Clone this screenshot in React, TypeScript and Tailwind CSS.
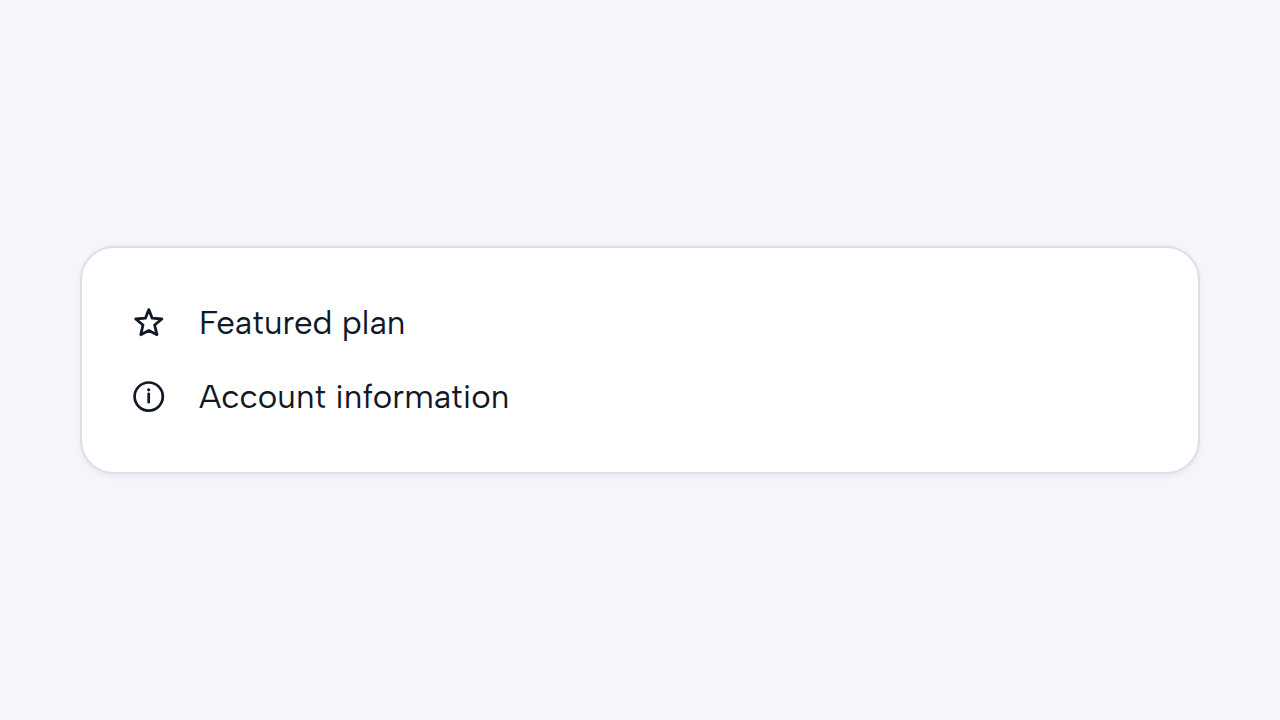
import React from "react";

type Item = {
  label: string;
  icon: React.ReactNode;
};

const StarIcon: React.FC = () => (
  <svg
    viewBox="0 0 34 34"
    className="size-[34px] shrink-0"
    fill="none"
    stroke="currentColor"
    strokeWidth="2.8"
    strokeLinejoin="round"
    aria-hidden="true"
  >
    <path d="M16.8 3.6 L20.2 12.2 L29.9 13 L22.6 19 L25 28.7 L16.8 24.6 L8.8 28.7 L11 19 L3.7 13 L13.4 12.2 Z" />
  </svg>
);

const InfoIcon: React.FC = () => (
  <svg
    viewBox="0 0 34 34"
    className="size-[34px] shrink-0"
    fill="none"
    stroke="currentColor"
    strokeWidth="2.7"
    strokeLinecap="round"
    aria-hidden="true"
  >
    <circle cx="16.7" cy="16.6" r="14.1" />
    <path d="M16.7 13.8 V22.2" />
    <circle cx="16.7" cy="9.8" r="1.6" fill="currentColor" stroke="none" />
  </svg>
);

const ITEMS: Item[] = [
  { label: "Featured plan", icon: <StarIcon /> },
  { label: "Account information", icon: <InfoIcon /> },
];

const App: React.FC = () => {
  return (
    <main className="flex min-h-screen items-center bg-[#f4f6fa] px-20 font-['Albert_Sans','Figtree','Lato',sans-serif] text-[#111827]">
      <section className="w-full rounded-[34px] border-2 border-[#dcdfe8] bg-white px-[50px] py-[38px] shadow-[0_2px_6px_rgba(17,24,39,0.06)]">
        <ul>
          {ITEMS.map((item) => (
            <li key={item.label} className="flex h-[74px] items-center gap-[33px]">
              {item.icon}
              <span className="text-[33px] leading-[50px]">{item.label}</span>
            </li>
          ))}
        </ul>
      </section>
    </main>
  );
};

export default App;
